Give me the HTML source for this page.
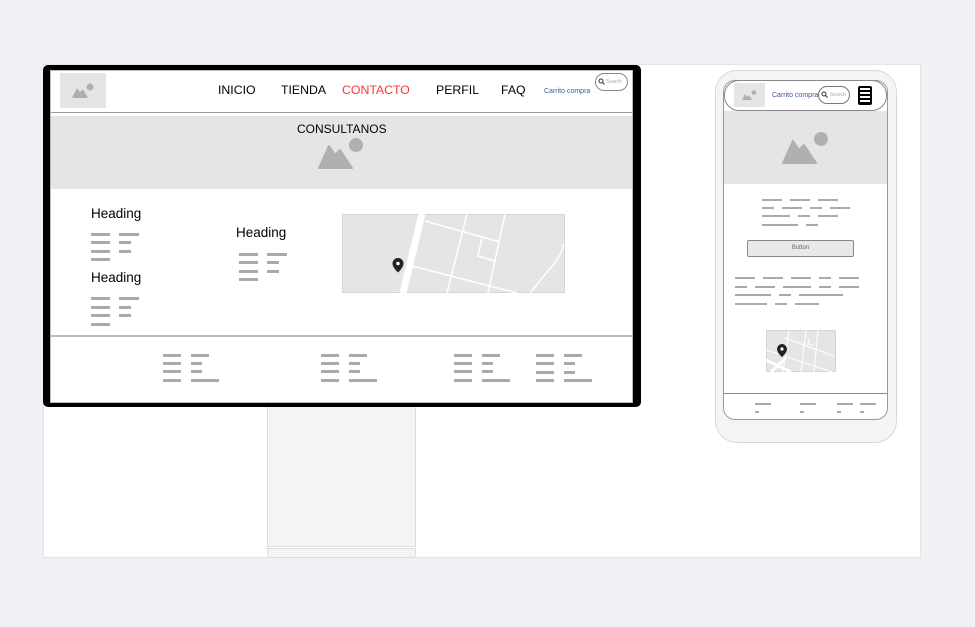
<!DOCTYPE html>
<html><head><meta charset="utf-8"><style>
*{margin:0;padding:0;box-sizing:border-box}
body{width:975px;height:627px;background:#f0f1f4;position:relative;overflow:hidden;font-family:"Liberation Sans",Arial,sans-serif}
.a{position:absolute}
.b{position:absolute;height:3px;background:#aaa}
</style></head><body>
<div class="a" style="left:43px;top:64px;width:878px;height:494px;background:#fff;border:1px solid #e4e4e4"></div>

<div class="a" style="left:267px;top:406px;width:149px;height:141px;background:#f4f4f4;border:1px solid #ddd"></div>
<div class="a" style="left:267px;top:548px;width:149px;height:10px;background:#f4f4f4;border:1px solid #ddd;border-radius:0 0 3px 3px"></div>

<div class="a" style="left:43px;top:65px;width:598px;height:342px;background:#000;border-radius:5px"></div>
<div class="a" style="left:50px;top:70px;width:583px;height:333px;background:#fff;border:1px solid #bbb"></div>
<div class="a" style="left:60px;top:73px;width:46px;height:35px;background:#e5e5e5"></div>
<svg class="a" style="left:71px;top:82px" width="24" height="17" viewBox="0 0 24 17"><circle cx="19" cy="5" r="3.5" fill="#b0b0b0"/><path d="M1 16 L6 6 L9 10 L12 7 L17 16Z" fill="#b0b0b0"/></svg>
<div class="a" style="left:218px;top:83px;font-size:12.3px">INICIO</div>
<div class="a" style="left:281px;top:83px;font-size:12.3px">TIENDA</div>
<div class="a" style="left:342px;top:83px;font-size:12.3px;color:#f33">CONTACTO</div>
<div class="a" style="left:436px;top:83px;font-size:12.3px">PERFIL</div>
<div class="a" style="left:501px;top:83px;font-size:12.3px">FAQ</div>
<div class="a" style="left:544px;top:88px;font-size:7px;color:#3a5a9a">Carrito compra</div>
<div class="a" style="left:595px;top:73px;width:33px;height:18px;border:1px solid #888;border-radius:9px;font-size:5px;color:#aaa;padding:5px 0 0 10px">Search</div>
<svg class="a" style="left:598px;top:78px" width="7" height="7" viewBox="0 0 7 7"><circle cx="3" cy="3" r="2" fill="none" stroke="#333" stroke-width="1"/><path d="M4.5 4.5L6.5 6.5" stroke="#333"/></svg>
<div class="a" style="left:51px;top:112px;width:581px;height:1px;background:#999"></div>
<div class="a" style="left:51px;top:116px;width:581px;height:73px;background:#e5e5e5"></div>
<div class="a" style="left:297px;top:122px;font-size:12px">CONSULTANOS</div>
<svg class="a" style="left:318px;top:137px" width="46" height="32" viewBox="0 0 46 32"><circle cx="38" cy="8" r="7" fill="#b0b0b0"/><path d="M1 31 L11 9 L17 18 L22 13 L34 31Z" fill="#b0b0b0" stroke="#b0b0b0" stroke-linejoin="round" stroke-width="2"/></svg>

<div class="a" style="left:91px;top:206px;font-size:13.5px">Heading</div>
<div class="a" style="left:91px;top:270px;font-size:13.5px">Heading</div>
<div class="a" style="left:236px;top:225px;font-size:13.5px">Heading</div>
<div class="b" style="left:91px;top:233px;width:19px"></div><div class="b" style="left:119px;top:233px;width:20px"></div>
<div class="b" style="left:91px;top:241px;width:19px"></div><div class="b" style="left:119px;top:241px;width:12px"></div>
<div class="b" style="left:91px;top:250px;width:19px"></div><div class="b" style="left:119px;top:250px;width:12px"></div>
<div class="b" style="left:91px;top:258px;width:19px"></div>
<div class="b" style="left:91px;top:297px;width:19px"></div><div class="b" style="left:119px;top:297px;width:20px"></div>
<div class="b" style="left:91px;top:306px;width:19px"></div><div class="b" style="left:119px;top:306px;width:12px"></div>
<div class="b" style="left:91px;top:314px;width:19px"></div><div class="b" style="left:119px;top:314px;width:12px"></div>
<div class="b" style="left:91px;top:323px;width:19px"></div>
<div class="b" style="left:239px;top:253px;width:19px"></div><div class="b" style="left:267px;top:253px;width:20px"></div>
<div class="b" style="left:239px;top:261px;width:19px"></div><div class="b" style="left:267px;top:261px;width:12px"></div>
<div class="b" style="left:239px;top:270px;width:19px"></div><div class="b" style="left:267px;top:270px;width:12px"></div>
<div class="b" style="left:239px;top:278px;width:19px"></div>

<svg class="a" style="left:342px;top:214px" width="223" height="79" viewBox="0 0 223 79">
<rect x="0.5" y="0.5" width="222" height="78" fill="#e5e5e5" stroke="#d5d5d5"/>
<g stroke="#fff" fill="none" stroke-width="1.5">
<path d="M80 0 L61 79" stroke-width="7"/>
<path d="M83 7 L158 28"/><path d="M125 0 L105 79"/><path d="M163 0 L146 79"/>
<path d="M140 24 L136 42 L153 47"/><path d="M70 52 L175 79"/>
<path d="M222 30 Q218 45 205 58 L188 79"/></g>
<path d="M56 44 a5.5 5.5 0 0 1 5.5 5.5 c0 4 -5.5 9 -5.5 9 c0 0 -5.5 -5 -5.5 -9 a5.5 5.5 0 0 1 5.5 -5.5z" fill="#222"/>
<circle cx="56" cy="49.5" r="1.8" fill="#fff"/>
</svg>

<div class="a" style="left:51px;top:335px;width:581px;height:2px;background:#bbb"></div>
<div class="b" style="left:163px;top:354px;width:18px"></div><div class="b" style="left:191px;top:354px;width:18px"></div>
<div class="b" style="left:163px;top:362px;width:18px"></div><div class="b" style="left:191px;top:362px;width:11px"></div>
<div class="b" style="left:163px;top:370px;width:18px"></div><div class="b" style="left:191px;top:370px;width:11px"></div>
<div class="b" style="left:163px;top:379px;width:18px"></div><div class="b" style="left:191px;top:379px;width:28px"></div>
<div class="b" style="left:321px;top:354px;width:18px"></div><div class="b" style="left:349px;top:354px;width:18px"></div>
<div class="b" style="left:321px;top:362px;width:18px"></div><div class="b" style="left:349px;top:362px;width:11px"></div>
<div class="b" style="left:321px;top:370px;width:18px"></div><div class="b" style="left:349px;top:370px;width:11px"></div>
<div class="b" style="left:321px;top:379px;width:18px"></div><div class="b" style="left:349px;top:379px;width:28px"></div>
<div class="b" style="left:454px;top:354px;width:18px"></div><div class="b" style="left:482px;top:354px;width:18px"></div>
<div class="b" style="left:454px;top:362px;width:18px"></div><div class="b" style="left:482px;top:362px;width:11px"></div>
<div class="b" style="left:454px;top:370px;width:18px"></div><div class="b" style="left:482px;top:370px;width:11px"></div>
<div class="b" style="left:454px;top:379px;width:18px"></div><div class="b" style="left:482px;top:379px;width:28px"></div>
<div class="b" style="left:536px;top:354px;width:18px"></div><div class="b" style="left:564px;top:354px;width:18px"></div>
<div class="b" style="left:536px;top:362px;width:18px"></div><div class="b" style="left:564px;top:362px;width:11px"></div>
<div class="b" style="left:536px;top:371px;width:18px"></div><div class="b" style="left:564px;top:371px;width:11px"></div>
<div class="b" style="left:536px;top:379px;width:18px"></div><div class="b" style="left:564px;top:379px;width:28px"></div>

<div class="a" style="left:715px;top:70px;width:182px;height:373px;background:#f4f4f4;border:1px solid #d8d8d8;border-radius:22px"></div>
<div class="a" style="left:723px;top:80px;width:165px;height:340px;background:#fff;border:1px solid #999;border-radius:12px"></div>
<div class="a" style="left:724px;top:80px;width:163px;height:31px;border:1px solid #888;border-radius:15px;background:#fff"></div>
<div class="a" style="left:734px;top:83px;width:31px;height:24px;background:#e5e5e5"></div>
<svg class="a" style="left:741px;top:89px" width="16" height="12" viewBox="0 0 16 12"><circle cx="13" cy="3.5" r="2.3" fill="#b0b0b0"/><path d="M1 11 L4 5 L6 8 L8 6 L11 11Z" fill="#b0b0b0"/></svg>
<div class="a" style="left:772px;top:92px;font-size:7px;color:#3a5a9a">Carrito compra</div>
<div class="a" style="left:818px;top:86px;width:32px;height:18px;border:1px solid #777;border-radius:9px;font-size:5px;color:#aaa;padding:5px 0 0 11px;background:#fff">Search</div>
<svg class="a" style="left:821px;top:91px" width="7" height="7" viewBox="0 0 7 7"><circle cx="3" cy="3" r="2" fill="none" stroke="#333"/><path d="M4.5 4.5L6.5 6.5" stroke="#333"/></svg>
<div class="a" style="left:858px;top:86px;width:14px;height:19px;border:2px solid #000;border-radius:2px;background:repeating-linear-gradient(#fff 0 2px,#000 2px 4px)"></div>
<div class="a" style="left:724px;top:111px;width:163px;height:73px;background:#e5e5e5"></div>
<svg class="a" style="left:782px;top:131px" width="47" height="33" viewBox="0 0 47 33"><circle cx="39" cy="8" r="7" fill="#b0b0b0"/><path d="M1 32 L11 10 L17 19 L22 14 L34 32Z" fill="#b0b0b0" stroke="#b0b0b0" stroke-linejoin="round" stroke-width="2"/></svg>

<div class="b" style="left:762px;top:199px;width:20px;height:2px"></div><div class="b" style="left:790px;top:199px;width:20px;height:2px"></div><div class="b" style="left:818px;top:199px;width:20px;height:2px"></div>
<div class="b" style="left:762px;top:207px;width:12px;height:2px"></div><div class="b" style="left:782px;top:207px;width:20px;height:2px"></div><div class="b" style="left:810px;top:207px;width:12px;height:2px"></div><div class="b" style="left:830px;top:207px;width:20px;height:2px"></div>
<div class="b" style="left:762px;top:215px;width:28px;height:2px"></div><div class="b" style="left:798px;top:215px;width:12px;height:2px"></div><div class="b" style="left:818px;top:215px;width:20px;height:2px"></div>
<div class="b" style="left:762px;top:224px;width:36px;height:2px"></div><div class="b" style="left:806px;top:224px;width:12px;height:2px"></div>
<div class="a" style="left:747px;top:240px;width:107px;height:17px;background:#e8e8e8;border:1px solid #888;border-radius:2px;font-size:6px;color:#666;text-align:center;line-height:15px">Button</div>
<div class="b" style="left:735px;top:277px;width:20px;height:2px"></div><div class="b" style="left:763px;top:277px;width:20px;height:2px"></div><div class="b" style="left:791px;top:277px;width:20px;height:2px"></div><div class="b" style="left:819px;top:277px;width:12px;height:2px"></div><div class="b" style="left:839px;top:277px;width:20px;height:2px"></div>
<div class="b" style="left:735px;top:286px;width:12px;height:2px"></div><div class="b" style="left:755px;top:286px;width:20px;height:2px"></div><div class="b" style="left:783px;top:286px;width:28px;height:2px"></div><div class="b" style="left:819px;top:286px;width:12px;height:2px"></div><div class="b" style="left:839px;top:286px;width:20px;height:2px"></div>
<div class="b" style="left:735px;top:294px;width:36px;height:2px"></div><div class="b" style="left:779px;top:294px;width:12px;height:2px"></div><div class="b" style="left:799px;top:294px;width:44px;height:2px"></div>
<div class="b" style="left:735px;top:303px;width:32px;height:2px"></div><div class="b" style="left:775px;top:303px;width:12px;height:2px"></div><div class="b" style="left:795px;top:303px;width:24px;height:2px"></div>

<svg class="a" style="left:766px;top:330px" width="70" height="42" viewBox="0 0 70 42">
<rect x="0.5" y="0.5" width="69" height="41" fill="#e5e5e5" stroke="#d5d5d5"/>
<g stroke="#fff" fill="none" stroke-width="1">
<path d="M23 0 L17 42"/><path d="M40 0 L35 42"/><path d="M52 0 L48 42"/>
<path d="M19 8 L68 26"/><path d="M43 8 L42 14 L48 15"/><path d="M0 20 L66 42"/>
<path d="M0 30 L25 42" stroke-width="3"/><path d="M5 42 L20 28" stroke-width="3"/>
</g>
<path d="M16 14 a5 5 0 0 1 5 5 c0 4 -5 8 -5 8 c0 0 -5 -4 -5 -8 a5 5 0 0 1 5 -5z" fill="#222"/>
<circle cx="16" cy="19" r="1.6" fill="#fff"/>
</svg>
<div class="a" style="left:724px;top:393px;width:163px;height:1px;background:#888"></div>
<div class="b" style="left:755px;top:403px;width:16px;height:2px"></div><div class="b" style="left:800px;top:403px;width:16px;height:2px"></div><div class="b" style="left:837px;top:403px;width:16px;height:2px"></div><div class="b" style="left:860px;top:403px;width:16px;height:2px"></div>
<div class="b" style="left:755px;top:411px;width:4px;height:2px"></div><div class="b" style="left:800px;top:411px;width:4px;height:2px"></div><div class="b" style="left:837px;top:411px;width:4px;height:2px"></div><div class="b" style="left:860px;top:411px;width:4px;height:2px"></div>
</body></html>
